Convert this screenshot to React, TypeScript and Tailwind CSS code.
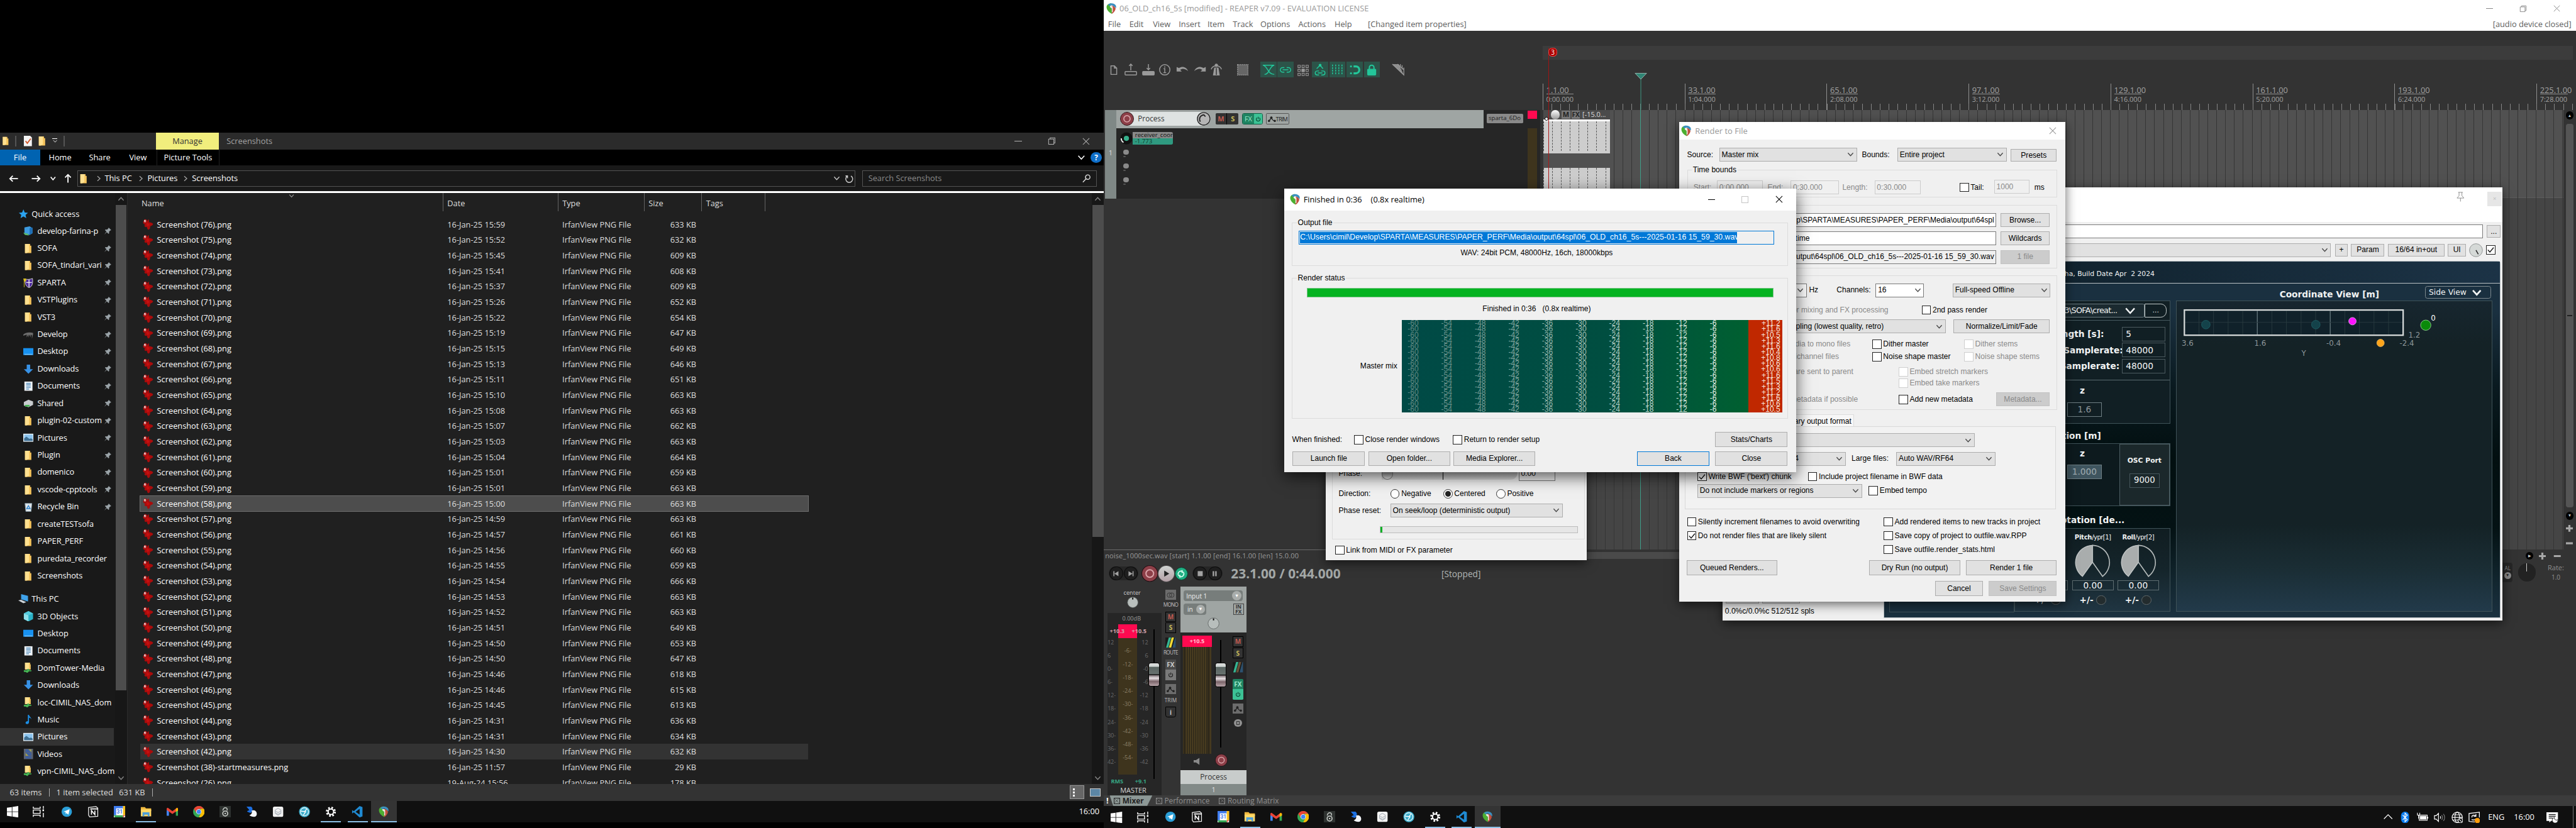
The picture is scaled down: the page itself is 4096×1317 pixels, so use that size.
import React from "react";

type P = { className?: string; children?: React.ReactNode };

/* ---------- shared drawings ---------- */

const ReaperIcon = ({ className = "" }: P) => (
  <svg viewBox="0 0 24 24" className={className}>
    <path d="M2 9C2 4 7 1 12 1c-3 3-2 8 1 10v12C7 20 2 15 2 9Z" fill="#4caf32" />
    <path d="M5 4c4-4 12-4 16 1 1 2 1 4 1 6L13 5 8 7Z" fill="#3b8fc0" />
    <path d="M12 6c5 0 8 3 9 6-1 5-4 9-8 11V12c-1-2-2-4-1-6Z" fill="#c0503f" />
    <path d="M9 7c3-2 6 0 6 3v9l-2 1v-8l-4-3Z" fill="#fff" fillOpacity=".85" />
  </svg>
);

const Chev = ({ className = "" }: P) => (
  <svg viewBox="0 0 12 12" className={className} fill="none" stroke="currentColor" strokeWidth="1.4">
    <path d="M1.5 3.5 6 8.5l4.5-5" />
  </svg>
);

const Folder = ({ className = "" }: P) => (
  <svg viewBox="0 0 18 18" className={className}>
    <path d="M3 1h9v3h2v13H3z" fill="#f5c45c" />
    <path d="M3 1h7v14l-4 2H3z" fill="#ffe08f" />
  </svg>
);

const CloseX = ({ className = "" }: P) => (
  <svg viewBox="0 0 14 14" className={className} fill="none" stroke="currentColor" strokeWidth="1.2">
    <path d="m1 1 12 12M13 1 1 13" />
  </svg>
);

const Restore = ({ className = "" }: P) => (
  <svg viewBox="0 0 14 14" className={className} fill="none" stroke="currentColor" strokeWidth="1.1">
    <path d="M1.5 3.5h9v9h-9zM4 3.5v-2h8.500v9h-2" />
  </svg>
);

/* ---------- file explorer ---------- */

const Splat = () => (
  <svg viewBox="0 0 20 20" className="h-5 w-5">
    <path
      d="M4 1c3-1 5 1 5 3 1-1 1-3 2-3s1 3 1 5c2 0 6 1 7 3 0 2-3 3-5 4 0 2 0 5-3 6-2 0-2-3-3-5-2 1-4 0-4-2l1-2C2 9 1 7 2 5Z"
      fill="#a90c0c"
    />
    <path d="M8 6c2 1 4 2 5 4-1 2-2 3-4 3-2-2-2-5-1-7Z" fill="#c40f0f" />
    <ellipse cx="5" cy="4" rx="2" ry="2.400" fill="#d98f8f" />
    <ellipse cx="4.600" cy="3.400" rx="1" ry="1.200" fill="#e9d5d5" />
  </svg>
);

const Pin = () => (
  <svg viewBox="0 0 14 14" className="h-[14px] w-[14px]" fill="#9aa3a8">
    <path d="M8.500 1 13 5.500l-1.500.5-2.300 2.300.2 2.700-1.200 1L5.300 9 1 13l3.700-5L2 5.500l1.200-1 2.700.2L8 2.500Z" />
  </svg>
);

const NavIcon = ({ kind }: { kind: string }) => {
  const c = "h-[18px] w-[18px]";
  switch (kind) {
    case "star":
      return (
        <svg viewBox="0 0 18 18" className={c}>
          <path d="m9 1 2.300 5.500 5.700.5-4.300 3.800L14 16.500 9 13.400 4 16.500l1.300-5.700L1 7l5.700-.5Z" fill="#2ba3f0" />
        </svg>
      );
    case "server":
      return (
        <svg viewBox="0 0 18 18" className={c}>
          <path d="M2 3l9-2 5 3v9l-5 3-9-3Z" fill="#3d9be0" />
          <path d="M11 4l5-1v10l-5 3Z" fill="#1f6fb5" />
          <path d="M0 12l8 2 2 3-7-1Z" fill="#5bb96b" />
        </svg>
      );
    case "shield":
      return (
        <svg viewBox="0 0 18 18" className={c}>
          <path d="M3 2c4 1 8 1 13-1 1 8 0 14-6 16C4 15 3 9 3 2Z" fill="#4d2a9c" stroke="#ddd" />
          <path d="M10 3v13M5 8h10" stroke="#eee" strokeWidth="1.500" />
          <path d="M0 1h5v5H2v10H1V5Z" fill="#d8c020" />
        </svg>
      );
    case "drive":
      return (
        <svg viewBox="0 0 18 18" className={c}>
          <path d="M0 9c3-3 9-5 17-3v3c-1 2-1 5-2 7V10l-2-1v5l-2-5-2 5V9L6 14V9l-6 2Z" fill="#6c6c6c" />
        </svg>
      );
    case "desktop":
      return (
        <svg viewBox="0 0 18 18" className={c}>
          <rect x="0" y="3" width="18" height="12" fill="#1791f0" />
          <rect x="2" y="13" width="14" height="1.500" fill="#7cc7ff" />
        </svg>
      );
    case "down":
      return (
        <svg viewBox="0 0 18 18" className={c}>
          <path d="M6 1h6v8h5l-8 8-8-8h5Z" fill="#3892e6" />
        </svg>
      );
    case "doc":
      return (
        <svg viewBox="0 0 18 18" className={c}>
          <rect x="2" y="1" width="14" height="16" fill="#eef3f7" />
          <path d="M5 4h8M5 6.500h8M5 9h8M5 11.500h8M5 14h5" stroke="#4a86b8" strokeWidth="1.300" />
        </svg>
      );
    case "shared":
      return (
        <svg viewBox="0 0 18 18" className={c}>
          <path d="M1 7l8-4 8 3v6l-8 4-8-3Z" fill="#c8cccf" />
          <path d="M3 12h8v3H3Z" fill="#46b553" />
        </svg>
      );
    case "pics":
      return (
        <svg viewBox="0 0 18 18" className={c}>
          <rect x="0" y="2" width="18" height="14" fill="#e8f1f8" />
          <rect x="1.500" y="3.500" width="15" height="11" fill="#8cc4ee" />
          <path d="M1.500 14.500V10l4-3 5 4 3-1 3 2v2.500Z" fill="#3f6f92" />
        </svg>
      );
    case "bin":
      return (
        <svg viewBox="0 0 18 18" className={c}>
          <path d="M3 3h12l-1.500 14h-9Z" fill="#dfe6ea" stroke="#8aa0ad" />
          <path d="m6 12 3-5 3 5Z" fill="none" stroke="#2c83d0" strokeWidth="1.500" />
        </svg>
      );
    case "pc":
      return (
        <svg viewBox="0 0 18 18" className={c}>
          <path d="M5 1l12 3v10L5 10Z" fill="#3fa2ea" />
          <path d="M0 12l5-1 9 4-5 2Z" fill="#cfd5da" />
        </svg>
      );
    case "cube":
      return (
        <svg viewBox="0 0 18 18" className={c}>
          <path d="M9 0l8 4v10l-8 4-8-4V4Z" fill="#2bb3c9" />
          <path d="M1 4l8 3v11l-8-4Z" fill="#8fe0ea" />
          <path d="M1 4l8-4 8 4-8 3Z" fill="#55cbdc" />
        </svg>
      );
    case "net":
      return (
        <svg viewBox="0 0 18 18" className={c}>
          <path d="M3 0h9v3h1v9H3z" fill="#f0c55e" />
          <path d="M3 0h7v10l-4 2H3z" fill="#ffe08f" />
          <path d="M1 13h6v-2h3v2h4v2h-4l-3 3-3-2H1Z" fill="#46b553" />
        </svg>
      );
    case "music":
      return (
        <svg viewBox="0 0 18 18" className={c}>
          <path d="M8 1h2c0 3 4 4 4 8-1-2-2-3-4-3v8c0 4-6 4-6 1 0-2 2-3 4-3Z" fill="#1c8fe6" />
        </svg>
      );
    case "video":
      return (
        <svg viewBox="0 0 18 18" className={c}>
          <rect x="1" y="0" width="16" height="18" fill="#5c6472" />
          <path d="M4 1h10v5H4zM4 7h10v5H4zM4 13h10v4H4z" fill="#3d5e9e" />
          <path d="M9 1h5v5zM4 12V7l5 5z" fill="#a5a04c" />
        </svg>
      );
    default:
      return <Folder className={c} />;
  }
};

const quick: [string, string, boolean][] = [
  ["server", "develop-farina-p", true],
  ["folder", "SOFA", true],
  ["folder", "SOFA_tindari_vari", true],
  ["shield", "SPARTA", true],
  ["folder", "VSTPlugins", true],
  ["folder", "VST3", true],
  ["drive", "Develop", true],
  ["desktop", "Desktop", true],
  ["down", "Downloads", true],
  ["doc", "Documents", true],
  ["shared", "Shared", true],
  ["folder", "plugin-02-custom", true],
  ["pics", "Pictures", true],
  ["folder", "Plugin", true],
  ["folder", "domenico", true],
  ["folder", "vscode-cpptools", true],
  ["bin", "Recycle Bin", true],
  ["folder", "createTESTsofa", false],
  ["folder", "PAPER_PERF", false],
  ["folder", "puredata_recorder", false],
  ["folder", "Screenshots", false],
];

const thisPc: [string, string][] = [
  ["cube", "3D Objects"],
  ["desktop", "Desktop"],
  ["doc", "Documents"],
  ["net", "DomTower-Media"],
  ["down", "Downloads"],
  ["net", "loc-CIMIL_NAS_dom"],
  ["music", "Music"],
  ["pics", "Pictures"],
  ["video", "Videos"],
  ["net", "vpn-CIMIL_NAS_dom"],
];

const files: [string, string, string][] = [
  ["(76)", "15:59", "633"], ["(75)", "15:52", "632"], ["(74)", "15:45", "609"], ["(73)", "15:41", "608"],
  ["(72)", "15:37", "609"], ["(71)", "15:26", "652"], ["(70)", "15:22", "654"], ["(69)", "15:19", "647"],
  ["(68)", "15:15", "649"], ["(67)", "15:13", "646"], ["(66)", "15:11", "651"], ["(65)", "15:10", "663"],
  ["(64)", "15:08", "663"], ["(63)", "15:07", "662"], ["(62)", "15:03", "663"], ["(61)", "15:04", "664"],
  ["(60)", "15:01", "659"], ["(59)", "15:01", "663"], ["(58)", "15:00", "663"], ["(57)", "14:59", "663"],
  ["(56)", "14:57", "661"], ["(55)", "14:56", "660"], ["(54)", "14:55", "659"], ["(53)", "14:54", "666"],
  ["(52)", "14:53", "663"], ["(51)", "14:52", "663"], ["(50)", "14:51", "649"], ["(49)", "14:50", "653"],
  ["(48)", "14:50", "647"], ["(47)", "14:46", "618"], ["(46)", "14:46", "615"], ["(45)", "14:45", "613"],
  ["(44)", "14:31", "636"], ["(43)", "14:31", "634"], ["(42)", "14:30", "632"],
];

const FileRow = ({ name, date, size, className = "" }: { name: string; date: string; size: string; className?: string }) => (
  <div className={`ml-[22px] flex h-[27px] w-[1161px] shrink-0 items-center ${className}`}>
    <div className="ml-[3px] w-[26px]"><Splat /></div>
    <div className="w-[505px] text-white">{name}</div>
    <div className="w-[200px]">{date}</div>
    <div className="w-[130px]">IrfanView PNG File</div>
    <div className="w-[103px] text-right">{size} KB</div>
  </div>
);

const Explorer = () => (
  <div className="flex h-[1162px] flex-col bg-[#202020] font-['Open_Sans',sans-serif] text-[14px] leading-none text-[#dedede]">
    <div className="flex h-[29px] shrink-0 items-center bg-[#2b2b2b]">
      <Folder className="ml-[2px] h-4 w-4" />
      <div className="ml-[8px] h-[18px] w-[2px] bg-[#555]" />
      <svg viewBox="0 0 16 18" className="ml-[12px] h-[18px] w-[16px]">
        <path d="M1 0h11l3 3v15H1Z" fill="#f4f4f4" />
        <path d="m4 9 3 4 6-8" fill="none" stroke="#d2582c" strokeWidth="2" />
      </svg>
      <Folder className="ml-[8px] h-[18px] w-[18px]" />
      <div className="ml-[9px] flex w-[9px] flex-col items-center text-white">
        <div className="h-px w-[9px] bg-white" />
        <Chev className="h-2 w-2" />
      </div>
      <div className="ml-[11px] h-[18px] w-[2px] bg-[#555]" />
      <div className="ml-[158px] flex h-full w-[110px] items-center justify-center bg-[#f1ee7d] pb-px text-[#333]">Manage</div>
      <div className="ml-[13px] flex-1 text-[#a3a3a3]">Screenshots</div>
      <div className="h-px w-[13px] bg-[#b0b0b0]" />
      <Restore className="ml-[45px] h-[14px] w-[14px] text-[#b0b0b0]" />
      <CloseX className="mr-[25px] ml-[46px] h-[13px] w-[13px] text-[#b0b0b0]" />
    </div>
    <div className="flex h-[28px] shrink-0 items-center bg-black text-white">
      <div className="flex h-full w-[70px] items-center justify-center bg-[#0063b1]">File</div>
      <div className="w-[69px] text-center">Home</div>
      <div className="w-[69px] text-center">Share</div>
      <div className="w-[64px] text-center">View</div>
      <div className="flex h-full w-[110px] items-center justify-center border-x border-[#222]">Picture Tools</div>
      <div className="flex-1" />
      <Chev className="h-[14px] w-[14px]" />
      <div className="mr-[4px] ml-[9px] flex h-[19px] w-[19px] items-center justify-center rounded-full bg-[#0f6fc9] text-[13px] font-bold">?</div>
    </div>
    <div className="flex h-[45px] shrink-0 items-center bg-[#191919] text-white">
      <svg viewBox="0 0 120 20" className="ml-[14px] h-5 w-[120px]" fill="none" stroke="#fff" strokeWidth="2">
        <path d="M17 10H3M8 5l-5 5 5 5M41 10h14M50 5l5 5-5 5M104 17V3M99 8l5-5 5 5" />
        <path d="m74 7 4 5 4-5" strokeWidth="1.800" />
      </svg>
      <div className="flex h-[28px] w-[1354px] items-center border border-[#535353]">
        <Folder className="ml-[2px] h-[18px] w-[18px]" />
        <span className="ml-[11px] text-[#aaa]"><Chev className="h-[11px] w-[11px] -rotate-90" /></span>
        <span className="ml-[5px]">This PC</span>
        <span className="ml-[10px] text-[#aaa]"><Chev className="h-[11px] w-[11px] -rotate-90" /></span>
        <span className="ml-[6px]">Pictures</span>
        <span className="ml-[8px] text-[#aaa]"><Chev className="h-[11px] w-[11px] -rotate-90" /></span>
        <span className="ml-[6px] flex-1">Screenshots</span>
        <Chev className="h-[12px] w-[12px] text-[#ccc]" />
        <svg viewBox="0 0 16 16" className="mr-[2px] ml-[8px] h-[16px] w-[16px]" fill="none" stroke="#ccc" strokeWidth="1.600">
          <path d="M5 3.200a6 6 0 1 0 6 0M5 7V3H1.500" />
        </svg>
      </div>
      <div className="ml-[12px] flex h-[28px] w-[408px] items-center border border-[#535353] text-[#8a8a8a]">
        <span className="ml-[9px] flex-1">Search Screenshots</span>
        <svg viewBox="0 0 16 16" className="mr-[10px] h-[15px] w-[15px]" fill="none" stroke="#ddd" strokeWidth="1.700">
          <circle cx="10" cy="5.500" r="4.200" /><path d="m7 8.500-6 6.500" />
        </svg>
      </div>
    </div>
    <div className="h-[3px] shrink-0 bg-white" />
    <div className="flex min-h-0 flex-1">
      <div className="w-[200px] shrink-0 overflow-hidden bg-[#191919] pt-[21px] text-white">
        <div className="flex h-[30px] items-center"><div className="ml-[32px] w-[23px]"><NavIcon kind="star" /></div>Quick access</div>
        {quick.map(([k, t, p]) => (
          <div key={t} className="flex h-[30px] items-center">
            <div className="ml-[40px] w-[25px] shrink-0"><NavIcon kind={k} /></div>
            <div className="w-[116px] shrink-0 leading-[24px] tracking-[-0.100px]">{t}</div>
            {p && <Pin />}
          </div>
        ))}
        <div className="mt-[10px] flex h-[30px] items-center"><div className="ml-[32px] w-[23px]"><NavIcon kind="pc" /></div>This PC</div>
        {thisPc.map(([k, t]) => (
          <div key={t} className={t === "Pictures" ? "flex h-[30px] w-[198px] items-center bg-[#333]" : "flex h-[30px] items-center"}>
            <div className="ml-[40px] w-[25px] shrink-0"><NavIcon kind={k} /></div>
            {t}
          </div>
        ))}
      </div>
      <div className="flex w-[22px] shrink-0 flex-col items-center border-r border-[#2c2c2c] bg-[#171717]">
        <Chev className="mt-[4px] h-[12px] w-[12px] rotate-180 text-[#8a8a8a]" />
        <div className="mt-[5px] h-[844px] w-[19px] bg-[#4d4d4d]" />
        <Chev className="mt-[147px] h-[12px] w-[12px] text-[#8a8a8a]" />
      </div>
      <div className="flex flex-1 flex-col overflow-hidden">
        <div className="flex h-[41px] shrink-0 items-start">
          <div className="flex h-[32px] w-[549px] items-center border-r border-[#636363] pt-[3px]">
            <span className="ml-[24px] w-[256px]">Name</span>
            <Chev className="mb-[26px] h-[10px] w-[10px] text-[#999]" />
          </div>
          <div className="flex h-[32px] w-[200px] items-center border-r border-[#636363] pt-[3px] pl-[7px]">Date</div>
          <div className="flex h-[32px] w-[150px] items-center border-r border-[#636363] pt-[3px] pl-[7px]">Type</div>
          <div className="flex h-[32px] w-[100px] items-center border-r border-[#636363] pt-[3px] pl-[7px]">Size</div>
          <div className="flex h-[32px] w-[110px] items-center border-r border-[#636363] pt-[3px] pl-[7px]">Tags</div>
        </div>
        {files.map(([n, d, s]) => (
          <FileRow
            key={n}
            name={`Screenshot ${n}.png`}
            date={`16-Jan-25 ${d}`}
            size={s}
            className={n === "(58)" ? "bg-[#4d4d4d] outline-1 -outline-offset-1 outline-[#6e6e6e]" : n === "(42)" ? "bg-[#333]" : ""}
          />
        ))}
        <FileRow name="Screenshot (38)-startmeasures.png" date="16-Jan-25 11:57" size="29" />
        <FileRow name="Screenshot (26).png" date="19-Aug-24 15:56" size="178" />
      </div>
      <div className="flex w-[21px] shrink-0 flex-col items-center bg-[#171717]">
        <Chev className="mt-[4px] h-[12px] w-[12px] rotate-180 text-[#8a8a8a]" />
        <div className="mt-[5px] h-[577px] w-[19px] bg-[#4d4d4d]" />
        <Chev className="mt-[414px] h-[12px] w-[12px] text-[#8a8a8a]" />
      </div>
    </div>
    <div className="flex h-[29px] shrink-0 items-center bg-[#333]">
      <span className="ml-[17px] w-[68px]">63 items</span>
      <div className="h-[14px] w-px bg-[#aaa]" />
      <span className="ml-[12px] w-[109px]">1 item selected</span>
      <span className="w-[58px]">631 KB</span>
      <div className="h-[14px] w-px bg-[#aaa]" />
      <div className="flex-1" />
      <div className="flex h-[24px] w-[26px] items-center justify-center border border-[#999] bg-[#666]">
        <div className="h-[14px] w-[14px] border-l-4 border-dotted border-white" />
      </div>
      <div className="mr-[6px] ml-[10px] h-[14px] w-[18px] border-2 border-[#ccc] bg-[#5c86a5]" />
    </div>
  </div>
);

/* ---------- taskbar ---------- */

const taskIcons: { key: string; svg: React.ReactNode; bar?: boolean; active?: boolean }[] = [
  {
    key: "telegram",
    svg: (<><circle cx="10" cy="10" r="9" fill="#2b9fd8" /><path d="m4 10 11-4.500-2 9.500-3.500-2.500L8 14v-3.500Z" fill="#fff" /></>),
  },
  {
    key: "notion",
    svg: (<><path d="M2 2.500 15 1l3 2.500V18l-14 1-2-3Z" fill="#111" stroke="#eee" strokeWidth="1.400" /><path d="M5 5h13M7 15V8l6 7V8" stroke="#fff" strokeWidth="1.800" fill="none" /></>),
  },
  {
    key: "calendar",
    svg: (<><path d="M0 0h20v20H0Z" fill="#fff" /><path d="M0 0h16v4H4v12H0Z" fill="#3f7df0" /><path d="M16 0h4v16h-4Z" fill="#f7bf1c" /><path d="M0 16h16v4H2Z" fill="#35a653" /><path d="M16 16h4l-4 4Z" fill="#e0453a" /><text x="10" y="13.500" fontSize="9" fontWeight="700" textAnchor="middle" fill="#3f7df0" fontFamily="Roboto">31</text></>),
  },
  {
    key: "explorer",
    bar: true,
    svg: (<><path d="M1 2h7l2 2h9v5H1Z" fill="#f0b93f" /><path d="M1 6h18v12H1Z" fill="#ffd868" /><path d="M4 18v-7h12v7h-3v-3H7v3Z" fill="#4c9fd8" /></>),
  },
  {
    key: "gmail",
    svg: (<><path d="M0 4v13h4V8Z" fill="#4285f4" /><path d="M20 4v13h-4V8Z" fill="#34a853" /><path d="m0 4 2-1 8 6 8-6 2 1v3l-10 7L0 7Z" fill="#ea4335" /><path d="m16 5 2-2 2 2v3l-4 2Z" fill="#fbbc04" /></>),
  },
  {
    key: "chrome",
    svg: (<><circle cx="10" cy="10" r="10" fill="#34a853" /><path d="M10 0c4 0 7 2 8.700 5H10L5 11 1.500 5C3 2 6.500 0 10 0Z" fill="#ea4335" /><path d="M18.700 5A10 10 0 0 1 10 20l4.500-9L13 5Z" fill="#fbbc04" /><circle cx="10" cy="10" r="4.600" fill="#fff" /><circle cx="10" cy="10" r="3.700" fill="#4285f4" /></>),
  },
  {
    key: "eight",
    svg: (<><path d="M0 0h20v20H0Z" fill="#2e3230" /><circle cx="10" cy="13" r="4.300" fill="none" stroke="#c9cdc9" strokeWidth="1.800" /><circle cx="10" cy="13" r="1.300" fill="#c9cdc9" /><path d="M6 8c0-3 2-5 4.500-5S14 5 13 8" fill="none" stroke="#c9cdc9" strokeWidth="1.600" /></>),
  },
  {
    key: "paint",
    svg: (<><path d="M1 1h8c4 3 3 8-1 11C4 11 2 10 2 9l4-2Z" fill="#1d6fe0" /><path d="M10 8c5-2 9 1 9 6 0 3-2 5-5 5-3-1-6-1-8-3 4-1 5-4 4-8Z" fill="#f4f6fa" /></>),
  },
  {
    key: "layers",
    svg: (<><rect x="1" y="1" width="18" height="18" rx="3" fill="#f2f2f2" /><path d="m10 4 5 3v6l-5 3-5-3V7Z" fill="none" stroke="#9aa3ad" /><path d="m6 9 4 2.500L14 9M6 12l4 2.500 4-2.500" fill="none" stroke="#9aa3ad" /></>),
  },
  {
    key: "clock",
    svg: (<><circle cx="10" cy="10" r="9.500" fill="#3aaccb" /><circle cx="10" cy="10" r="7" fill="none" stroke="#dff4fa" strokeWidth="1.400" /><path d="m4 9 8 1-4 6M10 10l4-5" fill="none" stroke="#fff" strokeWidth="1.500" /></>),
  },
  {
    key: "settings",
    bar: true,
    svg: (<><circle cx="10" cy="10" r="7" fill="none" stroke="#fff" strokeWidth="3.500" strokeDasharray="2.750 2.750" /><circle cx="10" cy="10" r="4.800" fill="none" stroke="#fff" strokeWidth="2.200" /></>),
  },
  {
    key: "vscode",
    bar: true,
    svg: (<><path d="m14 0 5 2v16l-5 2L4 11l-3 2V7l3 2Z" fill="#1f8ad2" /><path d="M14 5v10l-7-5Z" fill="#101010" /></>),
  },
];

const TaskbarIcons = () => (
  <>
    <svg viewBox="0 0 20 20" className="ml-[12px] h-5 w-5" fill="#fff">
      <path d="M0 3 8.500 1.800V9.500H0ZM9.500 1.600 20 0v9.500H9.500ZM0 10.500h8.500v7.700L0 17ZM9.500 10.500H20V20L9.500 18.400Z" />
    </svg>
    <svg viewBox="0 0 20 20" className="ml-[25px] h-5 w-5" fill="none" stroke="#fff" strokeWidth="1.500">
      <path d="M1 1v3h12V1M1 19v-3h12v3M1 7h12v6H1ZM18.500 0v5M18.500 12v8" /><path d="M17 7.500h3" strokeWidth="3" />
    </svg>
    <div className="w-[16px]" />
    {taskIcons.map((i) => (
      <div key={i.key} className="flex h-full w-[46px] flex-col items-center">
        <svg viewBox="0 0 20 20" className="mt-[9px] h-5 w-5">{i.svg}</svg>
        {i.bar && <div className="mt-auto h-[3px] w-[35px] bg-[#8cc0e6]" />}
      </div>
    ))}
    <div className="flex h-full w-[45px] flex-col items-center bg-[#343434]">
      <ReaperIcon className="mt-[9px] h-5 w-5" />
      <div className="mt-auto h-[3px] w-[45px] bg-[#8cc0e6]" />
    </div>
    <div className="flex-1" />
  </>
);

const Tray = () => (
  <div className="flex h-full items-center font-['Open_Sans',sans-serif] text-[14px] text-white">
    <svg viewBox="0 0 20 20" className="h-[18px] w-[18px]" fill="none" stroke="#fff" strokeWidth="1.500"><path d="m2 14 8-8 8 8" /></svg>
    <svg viewBox="0 0 20 20" className="ml-[11px] h-5 w-5"><rect x="3" width="14" height="20" rx="7" fill="#0a7cf0" /><path d="m6 6 8 8-4 3.500v-15L14 6l-8 8" fill="none" stroke="#fff" strokeWidth="1.300" /></svg>
    <svg viewBox="0 0 20 20" className="ml-[10px] h-5 w-5" fill="none" stroke="#fff" strokeWidth="1.200"><rect x="4" y="6" width="14" height="9" /><rect x="6" y="8" width="10" height="5" fill="#fff" /><path d="M19 9v3" strokeWidth="2" /><path d="M1 2v4h4V2M3 6v6" /></svg>
    <svg viewBox="0 0 20 20" className="ml-[10px] h-5 w-5" fill="none" stroke="#fff" strokeWidth="1.300"><path d="M1 7h3l4-4v14l-4-4H1ZM11 8c1 1 1 3 0 4" /><path d="M13.500 6c2 2 2 6 0 8M16.500 4c3 3 3 9 0 12" stroke="#777" /></svg>
    <svg viewBox="0 0 20 20" className="ml-[10px] h-5 w-5" fill="none" stroke="#fff" strokeWidth="1.200"><circle cx="10" cy="10" r="9" /><ellipse cx="10" cy="10" rx="4" ry="9" /><path d="M1 10h18M2.500 5.500h15M2.500 14.500H12" /><circle cx="15.500" cy="15.500" r="4" fill="#101010" /><path d="m13 13 5 5" /></svg>
    <svg viewBox="0 0 20 20" className="ml-[10px] h-5 w-5" fill="none" stroke="#fff" strokeWidth="1.400"><path d="M19 10V1L1 3v14l10 1" /><path d="M6 13c0 2 4 2 6 0M13 8c-2-3-7-2-7 1v1M13 4v4h-4" /><circle cx="15.500" cy="15.500" r="4.500" fill="#ff9d0a" stroke="none" /></svg>
    <span className="ml-[14px] w-[45px]">ENG</span>
    <span className="w-[57px]">16:00</span>
    <svg viewBox="0 0 20 20" className="h-5 w-5"><path d="M0 1h20v15H8l-3 3v-3H0Z" fill="#fff" /><path d="M4 5h12M4 8h12M4 11h7" stroke="#111" strokeWidth="1.300" /><path d="M20 14a5 5 0 1 1-6-4c-1 3 2 6 6 4Z" fill="#fff" stroke="#111" /></svg>
    <div className="ml-[25px] h-full w-px bg-[#777]" />
    <div className="w-[5px]" />
  </div>
);

/* ---------- dialog controls ---------- */

const Check = ({ on, off, className = "", children }: P & { on?: boolean; off?: boolean }) => (
  <div className={`flex items-center ${off ? "text-[#8a8a8a]" : ""} ${className}`}>
    <div className={`mr-[3px] h-[16px] w-[16px] shrink-0 border bg-white ${off ? "border-[#cfcfcf]" : "border-[#222]"}`}>
      {on && (
        <svg viewBox="0 0 14 14" className="h-[14px] w-[14px]" fill="none" stroke="#111" strokeWidth="1.500"><path d="m2 7 3.500 4L12 3" /></svg>
      )}
    </div>
    {children}
  </div>
);

const Btn = ({ off, className = "", children }: P & { off?: boolean }) => (
  <div className={`flex items-center justify-center border ${off ? "border-[#c2c2c2] bg-[#cccccc] text-[#8a8a8a]" : "border-[#adadad] bg-[#e1e1e1]"} ${className}`}>{children}</div>
);

const Select = ({ className = "", white, children }: P & { white?: boolean }) => (
  <div className={`flex h-[24px] items-center border pr-[4px] pl-[3px] ${white ? "border-[#7a7a7a] bg-white" : "border-[#adadad] bg-[#e1e1e1]"} ${className}`}>
    <div className="min-w-0 flex-1 overflow-hidden">{children}</div>
    <Chev className="h-[12px] w-[12px] shrink-0 text-[#444]" />
  </div>
);

const Group = ({ title, className = "", children }: P & { title?: string }) => (
  <div className={`flex flex-col border border-[#dcdcdc] ${className}`}>
    {title && (
      <div className="mt-[-10px] ml-[7px] flex h-[19px] w-fit shrink-0 items-center bg-[#f0f0f0] px-[2px]">{title}</div>
    )}
    {children}
  </div>
);

const Row = ({ className = "", children }: P) => (
  <div className={`flex shrink-0 items-center *:shrink-0 ${className}`}>{children}</div>
);

/* ---------- render-to-file dialog ---------- */

const RenderToFile = () => (
  <div className="absolute top-[212px] left-[1000px] flex h-[835px] w-[672px] flex-col bg-[#f0f0f0] font-['Liberation_Sans',Arial,sans-serif] text-[13.2px] leading-[16px] text-black shadow-[0_4px_18px_rgba(0,0,0,0.6)]">
    <Row className="h-[31px] bg-white font-['Open_Sans',sans-serif] text-[14.200px] text-[#999]">
      <ReaperIcon className="ml-[3px] h-5 w-5" />
      <span className="ml-[5px] w-[616px]">Render to File</span>
      <CloseX className="h-[13px] w-[13px]" />
    </Row>
    <Row className="mt-[14px] h-[24px]">
      <span className="ml-[14px] w-[56px]">Source:</span>
      <Select className="w-[240px]">Master mix</Select>
      <span className="ml-[8px] w-[62px]">Bounds:</span>
      <Select className="w-[190px]">Entire project</Select>
      <Btn className="mt-[2px] ml-[7px] h-[22px] w-[80px]">Presets</Btn>
    </Row>
    <Group title="Time bounds" className="mt-[14px] ml-[14px] h-[49px] w-[644px] shrink-0">
      <Row className="mt-[9px] h-[24px] text-[#8a8a8a]">
        <span className="ml-[10px] w-[41px]">Start:</span>
        <div className="h-[24px] w-[80px] border border-[#ccc] pt-[3px] pl-[3px]">0:00.000</div>
        <span className="ml-[8px] w-[40px]">End:</span>
        <div className="h-[24px] w-[84px] border border-[#ccc] pt-[3px] pl-[3px]">0:30.000</div>
        <span className="ml-[6px] w-[56px]">Length:</span>
        <div className="h-[24px] w-[80px] border border-[#ccc] pt-[3px] pl-[3px]">0:30.000</div>
        <Check className="ml-[68px] w-[60px] text-black">Tail:</Check>
        <div className="mb-[3px] h-[24px] w-[62px] border border-[#ccc] pt-[3px] pl-[3px]">1000</div>
        <span className="ml-[8px] text-black">ms</span>
      </Row>
    </Group>
    <Group className="mt-[13px] ml-[14px] h-[110px] w-[644px] shrink-0 gap-[8px] pt-[13px]">
      <Row className="h-[24px]">
        <div className="ml-[75px] flex h-[24px] w-[462px] items-center justify-end overflow-hidden border border-[#7a7a7a] bg-white pr-[3px]">C:\Users\cimil\Develop\SPARTA\MEASURES\PAPER_PERF\Media\output\64spl</div>
        <Btn className="ml-[7px] h-[24px] w-[86px]">Browse...</Btn>
      </Row>
      <Row className="h-[24px]">
        <div className="ml-[75px] flex h-[24px] w-[462px] items-center border border-[#7a7a7a] bg-white"><span className="w-[136px] text-right">$project---$datetime</span></div>
        <Btn className="ml-[7px] h-[24px] w-[86px]">Wildcards</Btn>
      </Row>
      <Row className="h-[24px]">
        <div className="ml-[75px] flex h-[24px] w-[462px] items-center justify-end overflow-hidden border border-[#7a7a7a] pr-[3px]">Media\output\64spl\06_OLD_ch16_5s---2025-01-16 15_59_30.wav</div>
        <Btn off className="ml-[7px] h-[24px] w-[86px]">1 file</Btn>
      </Row>
    </Group>
    <Group className="mt-[12px] ml-[14px] h-[234px] w-[644px] shrink-0">
      <Row className="mt-[13px] h-[24px]">
        <Select white className="ml-[125px] w-[82px]">48000</Select>
        <span className="ml-[4px] w-[48px]">Hz</span>
        <span className="w-[68px]">Channels:</span>
        <Select white className="w-[84px]">16</Select>
        <Select className="ml-[50px] w-[170px]">Full-speed Offline</Select>
      </Row>
      <Row className="mt-[14px] h-[16px]">
        <span className="w-[349px] text-right text-[#8a8a8a]">Use project sample rate for mixing and FX processing</span>
        <Check className="ml-[58px]">2nd pass render</Check>
      </Row>
      <Row className="mt-[9px] h-[24px]">
        <Select className="ml-[10px] w-[439px]"><div className="w-[327px] text-right">Point Sampling (lowest quality, retro)</div></Select>
        <Btn className="ml-[13px] h-[24px] w-[168px]">Normalize/Limit/Fade</Btn>
      </Row>
      <Row className="mt-[11px] h-[16px]">
        <span className="w-[283px] text-right text-[#8a8a8a]">Tracks with only mono media to mono files</span>
        <Check className="ml-[38px] w-[160px]">Dither master</Check>
        <Check off>Dither stems</Check>
      </Row>
      <Row className="mt-[6px] h-[16px]">
        <span className="w-[263px] text-right text-[#8a8a8a]">Multichannel tracks to multichannel files</span>
        <Check className="ml-[58px] w-[160px]">Noise shape master</Check>
        <Check off>Noise shape stems</Check>
      </Row>
      <Row className="mt-[10px] h-[16px]">
        <span className="w-[288px] text-right text-[#8a8a8a]">Only render channels that are sent to parent</span>
        <Check off className="ml-[79px]">Embed stretch markers</Check>
      </Row>
      <Row className="mt-[4px] h-[16px]"><Check off className="ml-[367px]">Embed take markers</Check></Row>
      <Row className="mt-[8px] h-[24px]">
        <span className="w-[296px] text-right text-[#8a8a8a]">Preserve metadata if possible</span>
        <Check className="ml-[71px] w-[169px]">Add new metadata</Check>
        <Btn off className="h-[24px] w-[94px]">Metadata...</Btn>
      </Row>
    </Group>
    <div className="mt-[8px] ml-[10px] h-[21px] w-[294px] shrink-0 border border-b-0 border-[#dcdcdc] bg-[#f7f7f7] pt-[3px] pr-[3px] text-right">Primary output format</div>
    <div className="ml-[10px] flex h-[144px] w-[645px] shrink-0 flex-col border border-[#d9d9d9] bg-[#f2f2f2]">
      <Row className="mt-[11px]"><Select className="ml-[21px] w-[482px]" /></Row>
      <Row className="mt-[8px]">
        <Select className="ml-[129px] w-[150px]"><div className="w-[64px] text-right">24</div></Select>
        <span className="ml-[10px] w-[78px]">Large files:</span>
        <Select className="w-[172px]">Auto WAV/RF64</Select>
      </Row>
      <Row className="mt-[11px] h-[16px]">
        <Check on className="ml-[21px] w-[192px]">Write BWF ('bext') chunk</Check>
        <Check>Include project filename in BWF data</Check>
      </Row>
      <Row className="mt-[5px]">
        <Select className="ml-[21px] w-[286px]">Do not include markers or regions</Select>
        <Check className="ml-[12px]">Embed tempo</Check>
      </Row>
    </div>
    <Row className="mt-[14px] h-[16px]">
      <Check className="ml-[14px] w-[342px]">Silently increment filenames to avoid overwriting</Check>
      <Check>Add rendered items to new tracks in project</Check>
    </Row>
    <Row className="mt-[8px] h-[16px]">
      <Check on className="ml-[14px] w-[342px]">Do not render files that are likely silent</Check>
      <Check>Save copy of project to outfile.wav.RPP</Check>
    </Row>
    <Row className="mt-[8px] h-[16px]"><Check className="ml-[356px]">Save outfile.render_stats.html</Check></Row>
    <Row className="mt-[11px]">
      <Btn className="ml-[13px] h-[26px] w-[158px]">Queued Renders...</Btn>
      <Btn className="ml-[160px] h-[26px] w-[158px]">Dry Run (no output)</Btn>
      <Btn className="ml-[10px] h-[26px] w-[158px]">Render 1 file</Btn>
    </Row>
    <Row className="mt-[10px]">
      <Btn className="ml-[445px] h-[26px] w-[84px]">Cancel</Btn>
      <Btn off className="ml-[10px] h-[26px] w-[118px]">Save Settings</Btn>
    </Row>
  </div>
);

/* ---------- render progress dialog ---------- */

const peaks = ["11.2", "11.6", "10.5", "11.3", "11.6", "10.4", "10.8", "10.6", "10.6", "11.6", "11.5", "11.3", "11.2", "11.6", "10.6", "10.5"];
const dbMarks: [string, string][] = [
  ["-60", "text-[#5f8782]"], ["-54", "text-[#6a908a]"], ["-48", "text-[#769b95]"], ["-42", "text-[#84a69f]"],
  ["-36", "text-[#93b2a9]"], ["-30", "text-[#a3bfb4]"], ["-24", "text-[#b3cbc1]"], ["-18", "text-[#c3d7cd]"],
  ["-12", "text-[#d3e2d9]"], ["-6", "text-[#e3ede7]"],
];

const Finished = () => (
  <div className="absolute top-[328px] left-[313px] flex h-[493px] w-[891px] flex-col bg-[#f0f0f0] font-['Liberation_Sans',Arial,sans-serif] text-[13.2px] leading-[16px] text-black shadow-[0_8px_26px_rgba(0,0,0,0.65)]">
    <Row className="h-[38px] bg-white font-['Open_Sans',sans-serif] text-[14px]">
      <ReaperIcon className="ml-[9px] h-5 w-5" />
      <span className="ml-[5px] w-[117px]">Finished in 0:36</span>
      <span className="w-[587px]">(0.8x realtime)</span>
      <div className="h-px w-[12px] bg-black" />
      <div className="ml-[46px] h-[12px] w-[12px] border border-[#c4c4c4]" />
      <CloseX className="ml-[47px] h-[13px] w-[13px]" />
    </Row>
    <Group title="Output file" className="mt-[21px] ml-[14px] h-[76px] w-[863px] shrink-0">
      <div className="mt-[4px] ml-[10px] flex h-[24px] w-[827px] items-center border border-[#0078d7] pl-[2px]">
        <span className="w-[760px] bg-[#0078d7] py-[2px] text-[13.400px] text-white">C:\Users\cimil\Develop\SPARTA\MEASURES\PAPER_PERF\Media\output\64spl\06_OLD_ch16_5s---2025-01-16 15_59_30.wav</span>
      </div>
      <div className="mt-[7px] pr-[12px] text-center">WAV: 24bit PCM, 48000Hz, 16ch, 18000kbps</div>
    </Group>
    <Group title="Render status" className="mt-[20px] ml-[14px] h-[246px] w-[863px] shrink-0">
      <div className="mt-[8px] ml-[25px] h-[16px] w-[811px] border border-[#7cc48a] bg-[#06b321]" />
      <div className="mt-[12px] pr-[12px] text-center whitespace-pre">Finished in 0:36{"   "}(0.8x realtime)</div>
      <Row className="mt-[12px] h-[160px]">
        <span className="w-[182px] text-right">Master mix</span>
        <div className="ml-[8px] flex h-[160px] w-[662px] overflow-hidden">
          <div className="w-[603px] bg-linear-to-r from-[#004a46] via-[#004e40] via-60% to-[#006030]">
            {peaks.map((p, r) => (
              <div key={r} className="flex h-[10px] pl-[10px] leading-[11px]">
                {dbMarks.map(([m, c]) => <span key={m} className={`w-[58.400px] ${c}`}>{m}</span>)}
              </div>
            ))}
          </div>
          <div className="w-[59px] bg-[#c02800] pr-[4px] text-right text-[#f6e4de]">
            {peaks.map((p, r) => <div key={r} className="h-[10px] leading-[11px]">+{p}</div>)}
          </div>
        </div>
      </Row>
    </Group>
    <Row className="mt-[23px] h-[26px]">
      <span className="ml-[14px] w-[108px]">When finished:</span>
      <Check className="w-[172px]">Close render windows</Check>
      <Check className="w-[456px]">Return to render setup</Check>
      <Btn className="h-[26px] w-[126px]">Stats/Charts</Btn>
    </Row>
    <Row className="mt-[7px] h-[26px]">
      <Btn className="ml-[15px] h-[26px] w-[126px]">Launch file</Btn>
      <Btn className="ml-[6px] h-[26px] w-[142px]">Open folder...</Btn>
      <Btn className="ml-[6px] h-[26px] w-[142px]">Media Explorer...</Btn>
      <div className="ml-[177px] flex h-[26px] w-[126px] items-center justify-center border-2 border-[#0078d7] bg-[#e1e1e1]">Back</div>
      <Btn className="ml-[10px] h-[26px] w-[126px]">Close</Btn>
    </Row>
  </div>
);

/* ---------- parameter modulation dialog ---------- */

const Radio = ({ on, children }: P & { on?: boolean }) => (
  <div className="flex w-[92px] items-center">
    <div className="mr-[3px] flex h-[16px] w-[16px] items-center justify-center rounded-full border border-[#333] bg-white">
      {on && <div className="h-[10px] w-[10px] rounded-full bg-[#222]" />}
    </div>
    {children}
  </div>
);

const Modulation = () => (
  <div className="absolute top-[800px] left-[386px] flex h-[175px] w-[454px] flex-col bg-[#f0f0f0] font-['Liberation_Sans',Arial,sans-serif] text-[13.2px] leading-[16px] text-black shadow-[0_4px_18px_rgba(0,0,0,0.6)]">
    <div className="ml-[11px] h-[138px] w-[439px] border border-t-0 border-[#dcdcdc]">
      <Row className="h-[37px] items-end">
        <span className="mb-[5px] ml-[10px] w-[75px]">Phase:</span>
        <div className="mb-[3px] flex h-[24px] w-[236px] items-center rounded-r-full bg-linear-to-b from-[#9a9a9a] to-[#dcdcdc]">
          <div className="h-[24px] w-[20px] rounded-full border-2 border-[#777] bg-linear-to-b from-[#555] to-[#eee]" />
          <div className="ml-[86px] h-[24px] w-px bg-black" />
        </div>
        <div className="ml-[2px] h-[24px] w-[64px] border border-[#7a7a7a] bg-[#f0f0f0] pt-[2px] pl-[3px]">0.00</div>
      </Row>
      <Row className="mt-[14px] h-[16px]">
        <span className="ml-[10px] w-[90px]">Direction:</span>
        <Radio>Negative</Radio><Radio on>Centered</Radio><Radio>Positive</Radio>
      </Row>
      <Row className="mt-[9px] h-[24px]">
        <span className="ml-[10px] w-[90px]">Phase reset:</span>
        <Select className="w-[300px]">On seek/loop (deterministic output)</Select>
      </Row>
      <div className="mt-[16px] ml-[82px] h-[12px] w-[344px] border border-[#bcbcbc] bg-[#e6e6e6]"><div className="h-full w-[3px] bg-[#06b025]" /></div>
    </div>
    <Check className="mt-[11px] ml-[16px]">Link from MIDI or FX parameter</Check>
  </div>
);

/* ---------- FX plugin window ---------- */

const Knob = ({ name, tag, cut }: { name: string; tag: string; cut?: boolean }) => (
  <div className="flex w-[79px] flex-col items-center">
    <div className="h-[20px] text-center text-[11px] leading-[20px] tracking-[-0.300px]"><b>{name}</b><span className="tracking-[-0.600px]">/{tag}</span></div>
    <svg viewBox="0 0 64 60" className="mt-[2px] h-[60px] w-[64px]">
      <path d="M32 31V1.500A30 30 0 0 0 14.500 55.500Z" fill="#a9adad" stroke="#c4c8c8" strokeWidth="1.500" />
      <path d="M32 1.500A30 30 0 0 1 49.500 55.500L32 31Z" fill="none" stroke="#b4baba" strokeWidth="1.800" />
    </svg>
    <div className="mt-[2px] flex h-[18px] w-[72px] items-center justify-center border border-[#5f6e72] text-[15px]">0.00</div>
    <div className={`mt-[8px] flex h-[18px] items-center text-[15px] font-bold ${cut ? "text-[#c8c8c8]" : ""}`}>
      +/-<div className="ml-[5px] h-[17px] w-[17px] rounded-full border-2 border-[#60686a] bg-[#232c2e]" />
    </div>
  </div>
);

const Plot = () => (
  <svg viewBox="0 0 550 541" className="h-full w-full" fontFamily="DejaVu Sans, sans-serif">
    <rect x="13.500" y="15.500" width="382" height="44" fill="#10212a" />
    {Array.from({ length: 14 }, (_, i) => (
      <path key={i} d={`M${13.5 + (i + 1) * 25.47} 17v42`} stroke={i === 4 || i === 9 ? "#62747a" : "#2a3b40"} strokeWidth={i === 4 || i === 9 ? 1.5 : 1} />
    ))}
    <path d="M14 37h382" stroke="#2a3b40" />
    <rect x="13.500" y="15.500" width="382" height="44" fill="none" stroke="#d6dada" strokeWidth="2.500" />
    <circle cx="51" cy="41" r="7.500" fill="#14424a" stroke="#1d5c62" />
    <circle cx="243" cy="41" r="7.500" fill="#14424a" stroke="#1d5c62" />
    <circle cx="307" cy="35" r="6.500" fill="#ff12ff" stroke="#e0a0e8" />
    <circle cx="356" cy="73" r="6.500" fill="#ffa51a" stroke="#e0b060" />
    <circle cx="435" cy="42" r="9" fill="#0a8a0a" stroke="#8fd08f" />
    <text x="448" y="34" textAnchor="middle" fontSize="13" fill="#fff">0</text>
    <g fontSize="13" fill="#8e979a" textAnchor="middle">
      <text x="19" y="78">3.6</text>
      <text x="146" y="78">1.6</text>
      <text x="274" y="78">-0.4</text>
      <text x="402" y="78">-2.4</text>
      <text x="415" y="64">1.2</text>
      <text x="222" y="96">Y</text>
    </g>
  </svg>
);

const FxWindow = () => (
  <div className="absolute top-[326px] left-[1076px] flex h-[753px] w-[1356px] flex-col bg-[#f0f0f0] font-['Liberation_Sans',Arial,sans-serif] text-[13.2px] leading-[16px] text-black shadow-[0_4px_18px_rgba(0,0,0,0.6)]">
    <div className="flex h-[60px] shrink-0 items-start bg-white">
      <svg viewBox="0 0 16 18" className="mt-[8px] ml-[1275px] h-[18px] w-[16px]" fill="none" stroke="#888"><path d="M4 1h8M5.500 1v6L2 11h12l-3.500-4V1M8 11v6" /></svg>
      <div className="mt-[8px] ml-[39px] flex h-[25px] w-[25px] items-center justify-center bg-[#e6e6e6] text-[10px] text-[#bbb]">×</div>
    </div>
    <Row className="mt-[5px] h-[24px]">
      <div className="ml-[10px] h-[24px] w-[1312px] border border-[#7a7a7a] bg-white" />
      <Btn className="ml-[7px] h-[22px] w-[24px]">...</Btn>
    </Row>
    <Row className="mt-[9px] h-[22px]">
      <Select className="ml-[10px] w-[1048px]" />
      <Btn className="ml-[7px] h-[22px] w-[22px]">+</Btn>
      <Btn className="ml-[6px] h-[22px] w-[58px]">Param</Btn>
      <Btn className="ml-[6px] h-[22px] w-[98px]">16/64 in+out</Btn>
      <Btn className="ml-[6px] h-[22px] w-[32px]">UI</Btn>
      <svg viewBox="0 0 24 24" className="ml-[5px] h-[24px] w-[24px]"><circle cx="12" cy="12" r="11.300" fill="#d5d9d7" stroke="#8d9190" /><path d="m12 12 4 7" stroke="#222" strokeWidth="1.600" /></svg>
      <Check on className="ml-[6px]" />
    </Row>
    <div className="mt-[8px] flex flex-1">
      <div className="flex w-[280px] flex-col justify-end">
        <Row><Btn className="ml-[5px] h-[22px] w-[58px]" /><Btn className="ml-[6px] h-[22px] w-[65px]" /></Row>
        <div className="mt-[5px] mb-[8px] ml-[4px]">0.0%c/0.0%c 512/512 spls</div>
      </div>
      <div className="flex h-[621px] w-[1073px] flex-col rounded-t-[5px] border-2 border-[#b9c0c4] bg-[linear-gradient(#1a3040_0%,#1a3040_14%,#0a1a20_35%,#020f10_55%,#041214_75%,#12262f_90%,#1b3140_100%)] font-['DejaVu_Sans',sans-serif] text-[15px] whitespace-nowrap text-[#f2f4f4]">
        <div className="flex h-[38px] shrink-0 items-center border-b-2 border-[#b9c0c4] bg-linear-to-r from-[#0d1d26] to-[#1c3346] pt-[8px]">
          <span className="w-[470px] text-right text-[11.800px] whitespace-pre">SPARTA 6DoFconv, Version 0.1 Alpha, Build Date Apr{"  "}2 2024</span>
        </div>
        <div className="flex flex-1">
          <div className="mt-[30px] ml-[9px] h-[542px] w-[217px] border border-[#3f5258] bg-[#1b3140]/80" />
          <div className="mt-[30px] flex w-[271px] flex-col">
            <div className="flex h-[214px] flex-col border border-[#3f5258] bg-[#111f24]">
              <Row className="mt-[4px] h-[24px]">
                <div className="flex h-[24px] w-[226px] items-center justify-end rounded-[3px] border border-[#6b7b80] bg-[#1b2a30] text-[14px] tracking-[-0.8px]">
                  VST3\SOFA\creat...
                  <Chev className="mr-[14px] ml-[13px] h-[20px] w-[20px] stroke-[1.600]" />
                </div>
                <div className="flex h-[24px] w-[38px] items-center justify-center rounded-r-[10px] border border-[#c3caca] text-[12px]">...</div>
              </Row>
              <div className="mt-[5px] h-px bg-[#46595f]" />
              <Row className="mt-[11px] h-[24px]"><b className="w-[155px] text-right">Room length [s]:</b><div className="ml-[31px] flex h-[25px] w-[76px] items-center border border-[#4b5a5f] pl-[6px]">5</div></Row>
              <Row className="mt-[4px] h-[24px]"><b className="mr-[-2px] w-[188px] text-right">DAW Samplerate:</b><div className="flex h-[25px] w-[76px] items-center border border-[#4b5a5f] pl-[6px]">48000</div></Row>
              <Row className="mt-[4px] h-[24px]"><b className="mr-[4px] w-[182px] text-right">SOFA Samplerate:</b><div className="flex h-[25px] w-[76px] items-center border border-[#4b5a5f] pl-[6px]">48000</div></Row>
              <div className="mt-[12px] h-px shrink-0 bg-[#5a6b70]" />
              <b className="mt-[9px] ml-[113px]">z</b>
              <div className="mt-[13px] ml-[91px] flex h-[25px] w-[60px] items-center justify-center border border-[#6f7f84] text-[#8b9498]">1.6</div>
            </div>
            <div className="h-[34px] w-[151px] pt-[13px] text-right font-bold">Position [m]</div>
            <div className="flex h-[109px] border border-[#3f5258] bg-[#0d1a1e]">
              <div className="w-[182px]">
                <b className="mt-[9px] ml-[113px] block">z</b>
                <div className="mt-[11px] ml-[91px] flex h-[25px] w-[60px] items-center justify-center border border-[#6f7f84] bg-[#3f555f] text-[#9fabb0]">1.000</div>
              </div>
              <div className="flex flex-1 flex-col items-center border border-[#4c5d62] bg-[#1b282b] pt-[21px]">
                <b className="text-[11.800px]">OSC Port</b>
                <div className="mt-[13px] flex h-[26px] w-[52px] items-center justify-center border border-[#46565b] text-[14.500px]">9000</div>
              </div>
            </div>
            <div className="h-[39px] w-[192px] pt-[17px] text-right font-bold">Rotation [de...</div>
            <div className="flex h-[145px] border border-[#3f5258] bg-[linear-gradient(#101d21_0%,#15252b_50%,#203542_100%)] pt-[5px] pl-[17px]">
              <Knob name="Yaw" tag="ypr[0]" cut />
              <Knob name="Pitch" tag="ypr[1]" />
              <Knob name="Roll" tag="ypr[2]" />
            </div>
          </div>
          <div className="ml-[10px] flex w-[550px] flex-col">
            <Row className="mt-[5px] h-[22px]">
              <b className="mt-[7px] ml-[179px] w-[176px] text-center">Coordinate View [m]</b>
              <div className="ml-[79px] flex h-[22px] w-[114px] items-center rounded-[4px] border-2 border-[#7d898e] pl-[5px] text-[13.500px]">
                Side View<Chev className="ml-[9px] h-[18px] w-[18px] stroke-2" />
              </div>
            </Row>
            <div className="mt-[3px] h-[541px] border border-[#3f5258] bg-[linear-gradient(#17262f_0%,#142226_14%,#142226_72%,#1a2d34_86%,#223a4a_100%)]"><Plot /></div>
          </div>
        </div>
      </div>
    </div>
  </div>
);

/* ---------- REAPER main window ---------- */

const Tool = ({ on, className = "", children }: P & { on?: boolean }) => (
  <div className={`flex h-[28px] w-[28px] items-center justify-center ${on ? "bg-[#2c5449] text-[#23c79a]" : "text-[#9a9a9a]"} ${className}`}>
    <svg viewBox="0 0 22 22" className="h-[22px] w-[22px]" fill="none" stroke="currentColor" strokeWidth="1.600">{children}</svg>
  </div>
);

const Toolbar = () => (
  <Row className="mt-[53px] h-[28px] pl-[3px]">
    <Tool><path d="M6 4h6l4 4v11H6ZM12 4v4h4" /></Tool>
    <Tool className="ml-[2px]"><path d="M11 12V1M8 4l3-3 3 3" /><rect x="1" y="14" width="20" height="6" rx="1" /></Tool>
    <Tool className="ml-[2px]"><path d="M11 1v10M8 8l3 3 3-3" /><rect x="1" y="14" width="20" height="6" rx="1" fill="currentColor" /></Tool>
    <Tool className="ml-[1px]"><circle cx="11" cy="11" r="9" /><path d="M9 9h2v7M8.500 16h5M11 5v2" /></Tool>
    <Tool className="ml-[2px]"><path d="M1 6v8h9L7 11c4-3 9-2 14 2-3-7-10-9-16-5Z" fill="currentColor" stroke="none" /></Tool>
    <Tool className="ml-[3px]"><path d="M21 6v8h-9l3-3c-4-3-9-2-14 2 3-7 10-9 16-5Z" fill="currentColor" stroke="none" /></Tool>
    <Tool className="ml-[1px]"><path d="m6 20 2-12h6l2 12Z" fill="currentColor" /><path d="M2 10c3-8 15-8 18 0" /><path d="M11 8v12" stroke="#333" /><circle cx="11" cy="3" r="2" fill="currentColor" /></Tool>
    <Tool className="ml-[17px]"><rect x="2" y="2" width="18" height="18" strokeDasharray="2 1.500" fill="#666" /></Tool>
    <Tool on className="ml-[17px]"><path d="M1 3c8 0 8 16 20 16M1 3h20M21 3C13 3 13 19 4 19" /></Tool>
    <Tool on className="ml-[2px]"><path d="M9 7H6a4 4 0 0 0 0 8h3M13 7h3a4 4 0 0 1 0 8h-3M6 11h10" /></Tool>
    <Tool className="ml-[2px]"><path d="M2 3h4v4H2zM9 3h4v4H9zM16 3h4v4h-4zM2 10h4v4H2zM9 10h4v4H9zM16 10h4v4h-4zM2 17h4v4H2zM9 17h4v4H9zM16 17h4v4h-4z" strokeWidth="1.200" /><path d="M9 10h4v4H9z" fill="currentColor" /></Tool>
    <Tool on className="ml-[2px]"><path d="M5 9l6-6 5 6" /><circle cx="11" cy="3" r="1.600" fill="currentColor" /><path d="M9 13H6a3 3 0 0 0 0 7h3M13 13h3a3 3 0 0 1 0 7h-3M7 16.500h8" /></Tool>
    <Tool on className="ml-[2px]"><path d="M3 2v18M8.500 2v18M14 2v18M19.500 2v18" strokeDasharray="3 1.500" /></Tool>
    <Tool on className="ml-[2px]"><path d="M9 5h4a6 6 0 0 1 0 12H9" strokeWidth="3.500" /><path d="M3 5h3M3 17h3" strokeWidth="3" /></Tool>
    <Tool on className="ml-[2px]"><rect x="4" y="10" width="14" height="10" rx="1" fill="currentColor" /><path d="M7 10V7a4 4 0 0 1 8 0v3" strokeWidth="2.200" /></Tool>
    <Tool className="ml-[18px]"><path d="M1 1h11l9 19Z" fill="#8f8f8f" stroke="none" /><path d="m1 1 20 19V7M10 1l11 10M15 1v6M18 3v7" strokeWidth="1.400" /></Tool>
  </Row>
);

const rulerMarks = [
  ["1.1.00", "0:00.000"], ["33.1.00", "1:04.000"], ["65.1.00", "2:08.000"], ["97.1.00", "3:12.000"],
  ["129.1.00", "4:16.000"], ["161.1.00", "5:20.000"], ["193.1.00", "6:24.000"], ["225.1.00", "7:28.000"],
];

const Ruler = () => (
  <div className="mt-[41px] flex h-[46px] overflow-hidden text-[#a2a2a2]">
    {rulerMarks.map(([a, b]) => (
      <div key={a} className="flex w-[246.900px] shrink-0 flex-col border-l border-[#8f8f8f]">
        <div className="ml-[5px] h-[18px] w-fit text-[14px] leading-[23px]">{a}</div>
        <div className="ml-[5px] h-px w-[48px] bg-[#8f8f8f]" />
        <div className="ml-[5px] h-[16px] text-[12px] leading-[17px]">{b}</div>
        <div className="ml-[-1px] flex h-[11px]">
          {Array.from({ length: 16 }, (_, i) => <div key={i} className="w-[15.430px] shrink-0 border-l border-[#858585]" />)}
        </div>
      </div>
    ))}
  </div>
);

const Arrange = () => (
  <div className="relative h-[765px] w-[1775px] overflow-hidden bg-[#454545]">
    <div className="h-[154px] border-b border-[#5c5c5c] bg-[#515151]" />
    <div className="absolute inset-0 flex">
      {Array.from({ length: 116 }, (_, i) => <div key={i} className="w-[15.430px] shrink-0 border-l border-[#363636]" />)}
    </div>
    <div className="absolute top-0 left-[1px] flex h-[155px] w-[116px] flex-col">
      <div className="flex h-[17px] items-center bg-[#4b4b4b] text-[12px] font-bold text-[#ddd]">
        <div className="ml-[13px] h-[16px] w-[16px] rounded-full bg-linear-to-b from-white to-[#999]" />
        <div className="ml-[3px] h-[14px] w-[15px] bg-[#777] text-center leading-[14px] text-[#222]">M</div>
        <div className="ml-[2px] h-[14px] w-[15px] bg-[#777] text-center text-[11px] leading-[14px] text-[#222]">FX</div>
        <span className="ml-[4px] font-normal">[-15.0...</span>
      </div>
      <div className="h-[3px] bg-white" />
      <div className="flex flex-1 flex-col justify-between bg-[#cdcdcd]">
        <div className="h-[52px]" /><div className="h-[25px] bg-[#515151]" /><div className="h-[50px]" />
      </div>
    </div>
    <div className="absolute top-[20px] left-[1px] flex h-[52px]">
      {Array.from({ length: 8 }, (_, i) => <div key={i} className="w-[15.430px] border-l border-dashed border-[#555]" />)}
    </div>
    <div className="absolute top-[101px] left-[1px] flex h-[52px]">
      {Array.from({ length: 8 }, (_, i) => <div key={i} className="w-[15.430px] border-l border-dashed border-[#555]" />)}
    </div>
    <div className="absolute top-0 left-[10px] h-[155px] w-px bg-[#b01818]" />
    <div className="absolute top-[12px] left-[3px] h-[7px] w-[7px] rounded-full border border-black bg-white" />
    <div className="absolute top-0 left-[170px] h-full w-px bg-[#3fa08a]" />
  </div>
);

const VScroll = () => (
  <div className="flex w-[22px] flex-col items-center bg-[#333]">
    <div className="mt-[3px] flex h-[14px] w-[14px] items-center justify-center rounded-full bg-black text-[7px] text-[#ccc]">▲</div>
    <div className="mt-[8px] flex h-[668px] w-[14px] items-center justify-center rounded-[4px] bg-[#555]"><div className="h-[2px] w-[8px] bg-[#222]" /></div>
    <div className="mt-[7px] flex h-[14px] w-[14px] items-center justify-center rounded-full bg-black text-[7px] text-[#ccc]">▼</div>
    <svg viewBox="0 0 12 44" className="mt-[8px] h-[44px] w-[12px]" stroke="#a8a8a8" strokeWidth="3.500"><path d="M0 7h12M6 1v12M0 33h12" /></svg>
  </div>
);

const PowerGlyph = () => (
  <svg viewBox="0 0 12 12" className="h-[10px] w-[10px]" fill="none" stroke="currentColor" strokeWidth="1.500"><path d="M3.500 3a4 4 0 1 0 5 0M6 1v5" /></svg>
);
const EnvGlyph = () => (
  <svg viewBox="0 0 14 12" className="h-[12px] w-[14px]" fill="none" stroke="currentColor" strokeWidth="1.400"><path d="m2 9 4-5 3 4 3 1" /><circle cx="2" cy="9" r="1.300" fill="currentColor" /><circle cx="6" cy="3.500" r="1.500" fill="currentColor" /><circle cx="12" cy="9" r="1.300" fill="currentColor" /></svg>
);
const RecBtn = ({ className = "" }: P) => (
  <svg viewBox="0 0 24 24" className={className}><circle cx="12" cy="12" r="11.500" fill="#8d3f48" stroke="#221014" /><circle cx="12" cy="12" r="5.500" fill="none" stroke="#d9a3a9" strokeWidth="1.800" /></svg>
);
const PanKnob = ({ className = "" }: P) => (
  <svg viewBox="0 0 24 24" className={className}><circle cx="12" cy="12" r="11" fill="#b8bebc" stroke="#5a5f5e" /><path d="M12 2v4" stroke="#111" strokeWidth="2.500" /></svg>
);

const TrackPanel = () => (
  <div className="ml-[2px] flex h-[155px] w-[757px]">
    <div className="flex w-[19px] flex-col items-center bg-[#7f8886] text-[12px] text-[#ddd]"><span className="mt-[69px]">1</span></div>
    <div className="flex flex-1 flex-col bg-[#262626]">
      <div className="flex">
        <Row className="h-[32px] w-[639px] bg-[#9fa5a3]">
          <div className="ml-[7px] flex h-[24px] w-[157px] items-center rounded-full bg-[#dfe3e2] text-[12.800px] text-[#333]">
            <RecBtn className="h-[24px] w-[24px]" />
            <span className="ml-[7px] flex-1">Process</span>
            <svg viewBox="0 0 24 24" className="h-[24px] w-[24px]"><circle cx="12" cy="12" r="11" fill="#b5b5b5" stroke="#222" strokeWidth="1.500" /><path d="M6 17C3 11 6 6 12 5l3 3" fill="none" stroke="#222" strokeWidth="2" /></svg>
          </div>
          <div className="ml-[9px] flex h-[20px] w-[40px] divide-x divide-black rounded-[2px] bg-[#323232] text-center text-[12px] leading-[20px] font-bold">
            <span className="w-1/2 text-[#c05a50]">M</span><span className="w-1/2 text-[#c9bc5a]">S</span>
          </div>
          <div className="ml-[6px] flex h-[20px] w-[36px] overflow-hidden rounded-[3px] border border-[#0e5f43] text-[12px] leading-[18px]">
            <span className="w-[20px] bg-[#1f8462] text-center text-[#9be8cb]">FX</span>
            <span className="flex flex-1 items-center justify-center bg-[#3cc295] text-[#0c4a35]"><PowerGlyph /></span>
          </div>
          <div className="ml-[6px] flex h-[20px] w-[40px] items-center justify-center rounded-[2px] border border-[#555] text-[10px] tracking-[-0.8px] text-[#222]"><EnvGlyph />TRIM</div>
        </Row>
        <div className="mt-[7px] ml-[6px] h-[16px] w-[63px] rounded-[2px] bg-[#8a8a8a] pl-[3px] text-[10.500px] leading-[15px] text-[#1c1c1c]">sparta_6Do</div>
        <div className="mt-[2px] ml-[8px] h-[14px] w-[16px] bg-[#ff0a50]" />
      </div>
      <div className="flex flex-1">
        <div className="w-[716px] pl-[7px]">
          <Row className="mt-[6px] h-[24px]">
            <svg viewBox="0 0 22 22" className="h-[22px] w-[22px]"><circle cx="11" cy="11" r="10.500" fill="#111" /><circle cx="11" cy="11" r="4.500" fill="#36b08c" /><path d="M2 11c0 4 2 6 4 7" stroke="#fff" strokeWidth="2" fill="none" /></svg>
            <div className="w-[70px] overflow-hidden rounded-r-[3px] text-[10.500px] leading-[11px]">
              <div className="bg-[#8a8a8a] pl-[4px] text-[#111]">receiver_coor</div>
              <div className="bg-[#2f9a80] pl-[4px] text-[#0d3a2d]">-1.773</div>
            </div>
          </Row>
          {[0, 1, 2].map((i) => (
            <div key={i} className="mt-[7px] ml-[6px] h-[17px]"><div className="h-[9px] w-[9px] rounded-full bg-[#8a8a8a]" /><div className="mt-[2px] h-[3px] w-[4px] rounded-full bg-[#555]" /></div>
          ))}
        </div>
        <div className="w-[16px] bg-[#3e341d]" />
      </div>
    </div>
  </div>
);

const Round = ({ className = "", children }: P) => (
  <div className={`flex items-center justify-center rounded-full border border-black/60 ${className}`}>
    <svg viewBox="0 0 16 16" className="h-[14px] w-[14px]" fill="currentColor">{children}</svg>
  </div>
);

const Transport = () => (
  <Row className="h-[40px]">
    <div className="ml-[8px] flex items-center rounded-full bg-[#262626] px-px text-[#a2a2a2]">
      <Round className="h-[24px] w-[24px] bg-[#1f1f1f]"><path d="M3 3h2v10H3zM13 3v10L5 8z" /></Round>
      <Round className="ml-[2px] h-[24px] w-[24px] bg-[#1f1f1f]"><path d="M11 3h2v10h-2zM3 3v10l8-5z" /></Round>
    </div>
    <RecBtn className="ml-[5px] h-[29px] w-[29px]" />
    <Round className="h-[29px] w-[29px] bg-linear-to-b from-[#cfd3d1] to-[#b3a0a6] text-[#222]"><path d="M4 2v12l10-6z" /></Round>
    <div className="flex h-[23px] w-[23px] items-center justify-center rounded-full border border-[#0c3a2b] bg-[#1fae82]">
      <svg viewBox="0 0 16 16" className="h-[15px] w-[15px]" fill="none" stroke="#d8fff0" strokeWidth="2"><path d="M3 10A5.500 5.500 0 0 1 11 3.500M13 6a5.500 5.500 0 0 1-8 6.500" /><path d="M10 1v4h3.500M6 15v-4H2.500" /></svg>
    </div>
    <div className="ml-[8px] flex items-center rounded-full bg-[#262626] px-px text-[#a2a2a2]">
      <Round className="h-[24px] w-[24px] bg-[#1f1f1f]"><path d="M3 3h10v10H3z" /></Round>
      <Round className="ml-[2px] h-[24px] w-[24px] bg-[#1f1f1f]"><path d="M4 3h3v10H4zM9 3h3v10H9z" /></Round>
    </div>
    <span className="ml-[15px] w-[366px] text-[22.800px] font-bold text-[#a3a8a7]">23.1.00 / 0:44.000</span>
    <span className="text-[15px] text-[#b3b8b7]">[Stopped]</span>
  </Row>
);

const Fader = ({ className = "", knob = "" }: { className?: string; knob?: string }) => (
  <div className={`flex w-[20px] flex-col items-center ${className}`}>
    <div className={`w-[3px] bg-black ${knob}`} />
    <div className="h-[42px] w-[20px] shrink-0 rounded-[4px] border border-black bg-[linear-gradient(#ddd_0%,#cfd6d3_14%,#5b6663_17%,#67716e_48%,#111_49%,#111_51%,#857a7e_54%,#e6dfe2_66%,#7b6469_80%,#b9a5aa_100%)]" />
    <div className="w-[3px] flex-1 bg-black" />
  </div>
);

const RouteGlyph = ({ dim }: { dim?: boolean }) => (
  <svg viewBox="0 0 18 18" className="h-[18px] w-[18px]">
    <rect width="18" height="18" fill="#1b1b1b" />
    <path d="M1 18 6 0h4L5 18Z" fill="#35b592" />
    <path d="M6 18 11 0h4l-5 18Z" fill={dim ? "#6a5138" : "#f2dc34"} />
    <path d="M12 18 17 0h1v18Z" fill="#2d5270" />
  </svg>
);

const Sq = ({ className = "", children }: P) => (
  <div className={`flex h-[18px] w-[19px] shrink-0 items-center justify-center text-[11px] font-bold ${className}`}>{children}</div>
);

const Mixer = () => (
  <div className="flex h-[364px] text-[10px] leading-none text-[#8a8a8a]">
    <div className="ml-[6px] flex w-[94px] flex-col">
      <div className="mt-[6px] text-center pr-[8px] text-[10px] text-[#ccc]">center</div>
      <PanKnob className="mt-[2px] ml-[34px] h-[20px] w-[20px]" />
      <div className="mt-[8px] flex h-[318px] flex-col bg-[#262626]">
        <div className="mt-[5px] pr-[10px] text-center text-[10px] text-[#999]">0.00dB</div>
        <div className="mt-[5px] flex h-[262px]">
          <div className="mt-[26px] flex w-[19px] flex-col text-[#6a6a6a]">
            {["12", "6", "0-", "6-", "12-", "18-", "24-", "30-", "36-", "42-"].map((t, i) => <span key={i} className="h-[23.150px]">{t}</span>)}
          </div>
          <div className="relative flex w-[33px] flex-col bg-[#3e341d] text-center text-[#8a7f66]">
            <div className="h-[24px] shrink-0 bg-[#ff0a50]" />
            <div className="absolute top-[7px] left-[-15px] flex w-[64px] justify-between font-bold text-[#d3a3ad]"><span>+10.3</span><span>+10.5</span></div>
            <div className="mt-[17px]">
              {["-6-", "-12-", "-18-", "-24-", "-30-", "-36-", "-42-", "-48-", "-54-"].map((t) => <div key={t} className="h-[23.250px]">{t}</div>)}
            </div>
          </div>
          <div className="mt-[26px] flex w-[19px] flex-col text-right text-[#6a6a6a]">
            {["12", "6", "-0", "-6", "-12", "-18", "-24", "-30", "-36", "-42"].map((t, i) => <span key={i} className="h-[23.150px]">{t}</span>)}
          </div>
          <Fader className="mt-[9px] h-[260px]" knob="h-[58px]" />
        </div>
        <div className="mt-[6px] flex w-[68px] justify-between pl-[6px] font-bold text-[#36a383]"><span>RMS</span><span>+9.1</span></div>
        <div className="mt-[5px] w-[90px] text-center text-[12px] text-[#d5d5d5]">MASTER</div>
      </div>
    </div>
    <div className="ml-[6px] flex w-[20px] flex-col items-center text-[9px] text-[#bbb]">
      <Sq className="mt-[6px] bg-[#6c6c6c]"><svg viewBox="0 0 16 10" className="h-[10px] w-[16px]" fill="none" stroke="#333"><circle cx="6" cy="5" r="4" /><circle cx="10" cy="5" r="4" /></svg></Sq>
      <span className="mt-[4px] tracking-[-0.800px]">MONO</span>
      <Sq className="mt-[7px] border border-black bg-[#333] text-[#c05a50]">M</Sq>
      <Sq className="mt-px border border-black bg-[#333] text-[#c9bc5a]">S</Sq>
      <div className="mt-[8px]"><RouteGlyph /></div>
      <span className="mt-[4px] tracking-[-0.800px]">ROUTE</span>
      <Sq className="mt-[7px] bg-[#4a4a4a] text-[#ccc]">FX</Sq>
      <Sq className="h-[15px] bg-[#7a7a7a] text-[#222]"><PowerGlyph /></Sq>
      <Sq className="mt-[7px] bg-[#6c6c6c] text-[#222]"><EnvGlyph /></Sq>
      <span className="mt-[6px]">TRIM</span>
      <Sq className="mt-[7px] rounded-b border border-black bg-[#333] text-[#ccc]">i</Sq>
    </div>
    <div className="ml-[7px] flex w-[115px] flex-col bg-[#262626]">
      <div className="flex h-[80px] shrink-0 flex-col bg-[#9fa5a3] pl-[5px] text-[11px] text-[#eee]">
        <div className="mt-[7px] flex h-[19px] w-[103px] items-center rounded-[4px] bg-[#777d7b] pl-[5px]"><span className="flex-1">Input 1</span><div className="mr-[2px] flex h-[16px] w-[16px] items-center justify-center rounded-full bg-[#a9adab] text-[8px] text-white">▼</div></div>
        <div className="mt-[4px] flex w-[105px] items-center justify-between">
          <div className="flex h-[19px] w-[40px] items-center rounded-[4px] bg-[#777d7b] pl-[7px]"><span className="flex-1">in</span><div className="mr-[2px] flex h-[16px] w-[16px] items-center justify-center rounded-full bg-[#a9adab] text-[8px] text-white">▼</div></div>
          <div className="flex h-[20px] w-[18px] flex-col items-center justify-center border border-[#444] text-[9px] leading-[8.500px] font-bold text-[#333]"><span>IN</span><span>FX</span></div>
        </div>
        <PanKnob className="mt-[4px] ml-[42px] h-[21px] w-[21px]" />
      </div>
      <div className="flex h-[240px] shrink-0">
        <div className="ml-[3px] mt-[6px] flex w-[52px] flex-col items-center">
          <div className="flex h-[19px] w-full items-center justify-center bg-[#ff0a50] font-bold text-[#ffc3d1]">+10.5</div>
          <div className="flex h-[186px] w-[50px] justify-between bg-[#262218]">
            {Array.from({ length: 16 }, (_, i) => <div key={i} className="w-[2px] bg-[#4a3d20]" />)}
          </div>
          <svg viewBox="0 0 12 12" className="mt-[7px] h-[13px] w-[12px]" fill="#8a8a8a"><path d="M0 4h4l6-4v12L4 8H0Z" /></svg>
        </div>
        <div className="ml-[5px] mt-[14px] w-[22px]">
          <Fader className="h-[187px]" knob="h-[39px]" />
          <RecBtn className="mt-[11px] h-[22px] w-[22px]" />
        </div>
        <div className="ml-[8px] mt-[7px] flex w-[20px] flex-col items-center">
          <Sq className="border border-black bg-[#333] text-[#c05a50]">M</Sq>
          <Sq className="mt-[2px] border border-black bg-[#333] text-[#c9bc5a]">S</Sq>
          <div className="mt-[7px]"><RouteGlyph dim /></div>
          <Sq className="mt-[11px] rounded-t-[2px] bg-[#1f8462] text-[#9be8cb]">FX</Sq>
          <Sq className="h-[16px] rounded-b-[2px] bg-[#3cc295] text-[#0c4a35]"><PowerGlyph /></Sq>
          <Sq className="mt-[7px] bg-[#6c6c6c] text-[#222]"><EnvGlyph /></Sq>
          <div className="mt-[9px] flex h-[14px] w-[14px] items-center justify-center rounded-full bg-[#8f8f8f]"><div className="h-[6px] w-[6px] border border-[#333]" /></div>
        </div>
      </div>
      <div className="flex h-[24px] shrink-0 items-center justify-center bg-[#c8cccb] text-[13px] text-[#333]">Process</div>
      <div className="flex flex-1 items-center justify-center bg-[#828a88] text-[12px] text-[#e0e0e0]">1</div>
    </div>
  </div>
);

const DockTab = ({ active, className = "", children }: P & { active?: boolean }) => (
  <div className={`flex h-[18px] items-center text-[13px] ${active ? "bg-[#8d9896] font-bold text-[#222] [clip-path:polygon(0_0,100%_0,88%_100%,8%_100%)]" : "text-[#8f8f8f]"} ${className}`}>
    <div className="mr-[4px] flex h-[11px] w-[11px] shrink-0 items-center justify-center border border-current"><CloseX className="h-[8px] w-[8px]" /></div>
    {children}
  </div>
);

const ReaperMain = () => (
  <div className="flex h-[1402px] flex-col bg-[#333] font-['Open_Sans',sans-serif] text-[14px] leading-none text-[#8f8f8f]">
    <div className="h-[54px] shrink-0 bg-white">
      <Row className="h-[30px] text-[#999]">
        <ReaperIcon className="ml-[3px] h-[21px] w-[20px]" />
        <span className="ml-[4px] w-[2377px]">06_OLD_ch16_5s [modified] - REAPER v7.09 - EVALUATION LICENSE</span>
        <div className="h-px w-[12px] bg-[#888]" />
        <Restore className="ml-[46px] h-[13px] w-[13px] text-[#888]" />
        <CloseX className="ml-[46px] h-[12px] w-[12px] text-[#888]" />
      </Row>
      <Row className="h-[24px] text-[#5d5d5d]">
        <span className="ml-[7px] w-[37px]">File</span><span className="w-[41px]">Edit</span><span className="w-[45px]">View</span>
        <span className="w-[50px]">Insert</span><span className="w-[44px]">Item</span><span className="w-[48px]">Track</span>
        <span className="w-[66px]">Options</span><span className="w-[63px]">Actions</span><span className="w-[58px]">Help</span>
        <span className="w-[1800px]">[Changed item properties]</span>
        <span className="w-[293px] text-right">[audio device closed]</span>
      </Row>
    </div>
    <div className="flex h-[137px] shrink-0">
      <div className="w-[763px]"><Toolbar /></div>
      <div className="relative w-[1797px]">
        <div className="mt-[26px] h-[24px] w-[1792px] bg-[#3c3c3c]" />
        <Ruler />
        <div className="absolute top-[29px] left-[10px] h-[108px] w-px bg-[#a01414]" />
        <div className="absolute top-[29px] left-[10px] flex h-[16px] w-[15px] items-center justify-center rounded-[6px] border border-[#e05050] bg-[#b00000] text-[11px] text-white">3</div>
        <svg viewBox="0 0 22 64" className="absolute top-[73px] left-[160px] h-[64px] w-[22px]"><path d="M1 .5h20L11 11Z" fill="#2f8574" stroke="#9fb9b2" /><path d="M11 11v53" stroke="#3fa08a" /></svg>
      </div>
    </div>
    <div className="flex h-[765px] shrink-0">
      <div className="w-[763px]"><TrackPanel /></div>
      <Arrange />
      <VScroll />
    </div>
    <div className="flex h-[64px] shrink-0">
      <div className="w-[840px]">
        <div className="h-[22px] border-t border-[#6a6a6a] pt-[4px] pl-[2px] text-[12px] tracking-[0.150px] text-[#9a9a9a]">noise_1000sec.wav [start] 1.1.00 [end] 16.1.00 [len] 15.0.00</div>
        <Transport />
      </div>
      <div className="flex-1">
        <div className="mt-[4px] h-[12px] w-[400px] bg-[#4a4a4a]" />
      </div>
      <div className="flex w-[128px] flex-col">
        <Row className="mt-[4px] h-[14px]">
          <div className="ml-[41px] flex h-[13px] w-[13px] items-center justify-center rounded-full bg-black text-[7px] text-[#ccc]">▶</div>
          <svg viewBox="0 0 40 12" className="ml-[9px] h-[12px] w-[40px]" stroke="#a8a8a8" strokeWidth="3.500"><path d="M0 6h12M6 0v12M26 6h12" /></svg>
        </Row>
        <Row className="mt-[5px] h-[34px]">
          <div className="flex h-[34px] w-[18px] flex-col items-center justify-center rounded-r-[4px] bg-[#262626] text-[9px]">AL<div className="mt-[2px] flex h-[12px] w-[12px] items-center justify-center rounded-full bg-[#8a8a8a] text-[7px] text-[#222]">▼</div></div>
          <div className="ml-[9px] flex h-[31px] w-[31px] justify-center rounded-full bg-[#222]"><div className="h-[14px] w-px bg-[#ccc]" /></div>
          <div className="ml-[18px] flex w-[34px] flex-col items-center gap-[5px] text-[12px]"><span>Rate:</span><span className="text-[11px]">1.0</span></div>
        </Row>
      </div>
    </div>
    <Mixer />
    <Row className="h-[18px] bg-[#3c3c3c]">
      <b className="ml-[4px] w-[6px] text-white">!</b>
      <DockTab active className="w-[74px] pl-[7px]">Mixer</DockTab>
      <DockTab className="ml-[6px] w-[110px]">Performance</DockTab>
      <DockTab className="w-[114px]">Routing Matrix</DockTab>
    </Row>
  </div>
);

/* ---------- two monitors side by side ---------- */

export default function App() {
  return (
    <div className="flex h-[1440.400px] w-[4480px] overflow-hidden bg-black whitespace-nowrap [zoom:0.9142857]">
      <div className="flex w-[1920px] shrink-0 flex-col bg-black pt-[231px]">
        <Explorer />
        <div className="flex h-[38px] items-center bg-[#101010]">
          <TaskbarIcons />
          <span className="mr-[8px] font-['Open_Sans',sans-serif] text-[14px] text-white">16:00</span>
        </div>
      </div>
      <div className="relative w-[2560px] shrink-0 overflow-hidden">
        <ReaperMain />
        <div className="flex h-[39px] items-center bg-[#101010]">
          <TaskbarIcons />
          <Tray />
        </div>
        <Modulation />
        <FxWindow />
        <RenderToFile />
        <Finished />
      </div>
    </div>
  );
}
